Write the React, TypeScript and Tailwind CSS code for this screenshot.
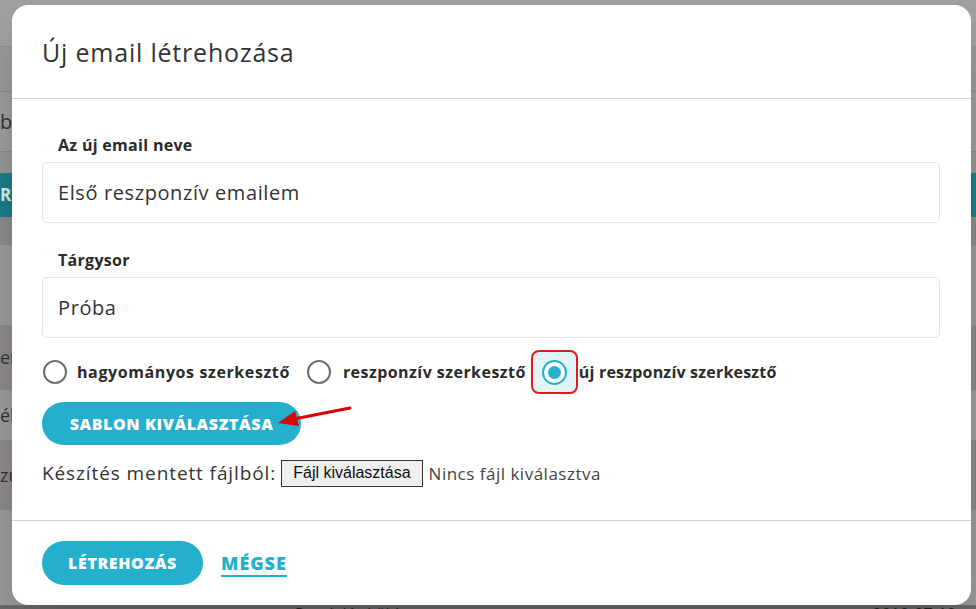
import React from 'react';

const font = { fontFamily: '"Open Sans", "Liberation Sans", sans-serif' };

// dimmed page behind the dialog
const BackgroundPage = () => {
  return (
    <div className="flex flex-col w-full h-[609px] overflow-hidden text-[#333]">
      <div className="h-[47px] shrink-0 bg-[#a0a0a0] border-b border-[#8f8f8f]" />
      <div className="h-[45px] shrink-0 bg-[#999999] border-b border-[#8a8a8a]" />
      <div className="h-[60px] shrink-0 bg-[#9c9c9c] border-b border-[#8a8a8a] flex items-center">
        <span className="text-[20px]">b</span>
      </div>
      <div className="h-[21px] shrink-0 bg-[#959595]" />
      <div className="h-[44px] shrink-0 bg-[#1b7e89] flex items-center">
        <span className="text-[17px] font-bold text-[#d9e9eb]">RE</span>
      </div>
      <div className="h-[28px] shrink-0 bg-[#8b8b8b]" />
      <div className="h-[80px] shrink-0 bg-[#9a9a9a]" />
      <div className="h-[65px] shrink-0 bg-[#8e8a8a] flex items-center">
        <span className="text-[18px]">er</span>
      </div>
      <div className="h-[50px] shrink-0 bg-[#9b9b9b] flex items-center">
        <span className="text-[18px]">ék</span>
      </div>
      <div className="h-[70px] shrink-0 bg-[#8e8a8a] flex items-center">
        <span className="text-[18px]">zü</span>
      </div>
      <div className="h-[95px] shrink-0 bg-[#9a9a9a]" />
      <div className="h-[30px] shrink-0 bg-[#6b6b6b] flex items-start pt-[1px]">
        <span className="ml-[295px] text-[16px] text-[#222] leading-none">Rendelés küldve</span>
        <span className="ml-auto mr-[20px] text-[16px] text-[#222] leading-none">2019-07-10</span>
      </div>
    </div>
  );
};

const Radio = ({ checked }: { checked?: boolean }) => (
  <div
    className={
      checked
        ? 'w-[25px] h-[25px] rounded-full border-2 border-[#24b0cc] flex items-center justify-center bg-white'
        : 'w-[24px] h-[24px] rounded-full border-2 border-[#707070] bg-white'
    }
  >
    {checked && <div className="w-[13px] h-[13px] rounded-full bg-[#24b0cc]" />}
  </div>
);

export default function App() {
  return (
    <div className="relative w-full h-[609px] overflow-hidden" style={font}>
      <BackgroundPage />

      {/* Modal */}
      <div className="absolute left-[12px] top-[5px] w-[959px] h-[600px] bg-white rounded-[16px] shadow-2xl flex flex-col">
        {/* Header */}
        <div className="h-[94px] shrink-0 border-b border-[#d7ced2] flex items-center pl-[30px] pt-[2px]">
          <h2 className="text-[25px] tracking-[0.8px] text-[#333] font-normal">Új email létrehozása</h2>
        </div>

        {/* Body */}
        <div className="relative flex-1 px-[30px] pt-[35px]">
          <label className="block pl-[16px] text-[16px] tracking-[0.3px] font-bold text-[#2b2b2b] leading-[22px]">
            Az új email neve
          </label>
          <div className="mt-[6px] h-[61px] w-[898px] border border-[#e4e4e4] rounded-[5px] flex items-center px-[15px]">
            <span className="text-[20px] tracking-[0.6px] text-[#333]">Első reszponzív emailem</span>
          </div>

          <label className="block mt-[26px] pl-[16px] text-[16px] tracking-[0.3px] font-bold text-[#2b2b2b] leading-[22px]">
            Tárgysor
          </label>
          <div className="mt-[6px] h-[61px] w-[898px] border border-[#e4e4e4] rounded-[5px] flex items-center px-[15px]">
            <span className="text-[20px] tracking-[0.6px] text-[#333]">Próba</span>
          </div>

          {/* editor choice */}
          <div className="mt-[12px] h-[44px] flex items-center text-[16px] font-bold text-[#2b2b2b]">
            <div className="ml-[1px]">
              <Radio />
            </div>
            <span className="ml-[10px] tracking-[0.6px]">hagyományos szerkesztő</span>
            <div className="ml-[17px]">
              <Radio />
            </div>
            <span className="ml-[12px] tracking-[0.45px]">reszponzív szerkesztő</span>
            <div className="ml-[5px] w-[47px] h-[44px] rounded-[8px] border-2 border-[#e01b1b] bg-[#e2f4f8] flex items-center justify-center">
              <Radio checked />
            </div>
            <span className="ml-[1px] tracking-[0.2px]">új reszponzív szerkesztő</span>
          </div>

          <button className="mt-[8px] h-[43px] w-[259px] rounded-full bg-[#24b0cc] text-white text-[16px] tracking-[0.6px] font-extrabold">
            SABLON KIVÁLASZTÁSA
          </button>

          <div className="mt-[14px] flex items-center">
            <span className="text-[19px] tracking-[0.9px] text-[#333]">Készítés mentett fájlból:</span>
            <span
              className="ml-[5px] h-[27px] px-[11px] border border-[#333] bg-[#efefef] text-[16px] text-[#111] flex items-center"
              style={{ fontFamily: '"Liberation Sans", Arial, sans-serif' }}
            >
              Fájl kiválasztása
            </span>
            <span className="ml-[6px] text-[17px] tracking-[0.5px] text-[#444]">Nincs fájl kiválasztva</span>
          </div>

          {/* annotation arrow */}
          <svg className="absolute left-[262px] top-[304px]" width="80" height="30" viewBox="0 0 80 30">
            <line x1="76" y1="5" x2="20" y2="16" stroke="#e00000" strokeWidth="3" strokeLinecap="round" />
            <polygon points="4,20 21,8 25,23" fill="#e00000" />
          </svg>
        </div>

        {/* Footer */}
        <div className="h-[85px] shrink-0 border-t border-[#d7ced2] flex items-center pl-[30px]">
          <button className="h-[44px] w-[161px] rounded-full bg-[#24b0cc] text-white text-[16px] tracking-[0.6px] font-extrabold">
            LÉTREHOZÁS
          </button>
          <button className="ml-[18px] text-[#24b0cc] text-[18px] tracking-[1px] font-extrabold border-b-2 border-[#24b0cc] leading-[24px] mt-[2px]">
            MÉGSE
          </button>
        </div>
      </div>
    </div>
  );
}
